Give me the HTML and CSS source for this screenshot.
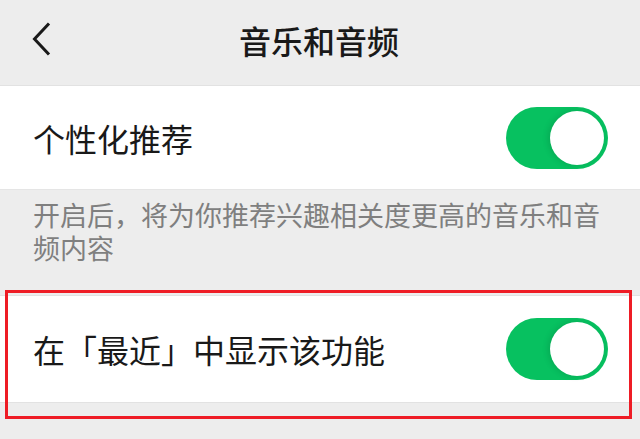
FILE: index.html
```html
<!DOCTYPE html>
<html lang="zh-CN">
<head>
<meta charset="utf-8">
<link rel="stylesheet" href="styles.css">
</head>
<body>
<div class="page">
  <header class="nav">
    <svg class="back" width="20" height="34" viewBox="0 0 20 34"><path d="M17 1.5 L2.5 17 L17 32.5" fill="none" stroke="#191919" stroke-width="3" stroke-linecap="butt" stroke-linejoin="miter"/></svg>
    <h1 class="title">音乐和音频</h1>
  </header>
  <section class="cell first">
    <span class="label">个性化推荐</span>
    <span class="switch"><span class="knob"></span></span>
  </section>
  <p class="desc">开启后，将为你推荐兴趣相关度更高的音乐和音频内容</p>
  <div class="mark-wrap">
    <section class="cell">
      <span class="label">在「最近」中显示该功能</span>
      <span class="switch"><span class="knob"></span></span>
    </section>
    <div class="mark"></div>
  </div>
</div>
</body>
</html>
```
FILE: styles.css
```css
html, body {
  margin: 0;
  padding: 0;
  background: #ededed;
}
body {
  font-family: "Noto Sans CJK SC", "Noto Sans", sans-serif;
  color: #191919;
  width: 640px;
  height: 439px;
  overflow: hidden;
}
.nav {
  height: 85px;
  display: flex;
  align-items: center;
  justify-content: center;
  position: relative;
  border-bottom: 1px solid #e2e2e2;
}
.back {
  position: absolute;
  left: 32px;
  top: 22px;
}
.title {
  margin: 0;
  font-size: 32px;
  font-weight: 500;
  line-height: 40px;
  margin-left: -2px;
  margin-top: -6px;
}
.cell {
  background: #fff;
  height: 103px;
  display: flex;
  align-items: center;
  justify-content: space-between;
  padding: 0 32px 0 33px;
  box-sizing: border-box;
}
.cell.first {
  height: 104px;
  border-bottom: 1px solid #e5e5e5;
}
.label {
  font-size: 32px;
  line-height: 40px;
}
.switch {
  width: 102px;
  height: 62px;
  border-radius: 31px;
  background: #07c160;
  position: relative;
  flex: none;
}
.knob {
  position: absolute;
  right: 4px;
  top: 4px;
  width: 54px;
  height: 54px;
  border-radius: 50%;
  background: #fff;
  box-shadow: -2px 0 6px rgba(0,0,0,0.12);
}
.desc {
  margin: 0;
  padding: 8px 40px 0 33px;
  height: 105px;
  box-sizing: border-box;
  font-size: 27px;
  line-height: 33px;
  color: #7f7f7f;
}
.mark-wrap {
  position: relative;
  border-top: 1px solid #e2e2e2;
  border-bottom: 1px solid #e2e2e2;
}
.mark-wrap .cell {
  height: 106px;
}
.mark {
  position: absolute;
  left: 5px;
  right: 8px;
  top: -6px;
  bottom: -17px;
  border: 3px solid #ee1c25;
  box-sizing: border-box;
}
```
